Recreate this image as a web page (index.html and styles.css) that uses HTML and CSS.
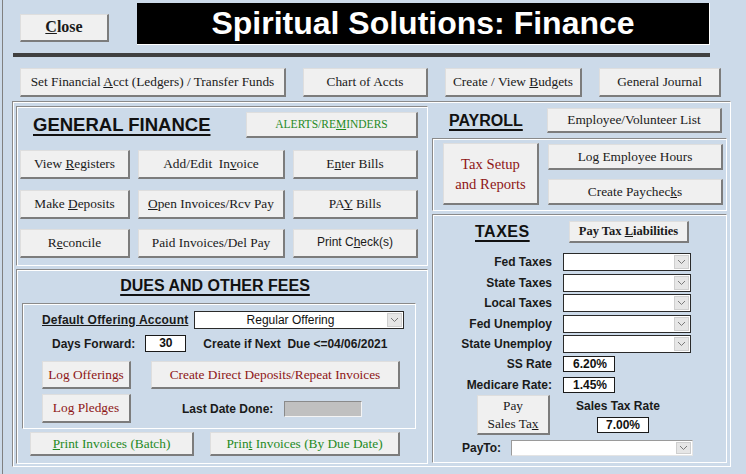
FILE: index.html
```html
<!DOCTYPE html>
<html lang="en">
<head>
    <meta charset="UTF-8">
    <title>Spiritual Solutions: Finance</title>
    <link rel="stylesheet" href="styles.css">
</head>
<body>
<div class="form">

    <div class="top">
        <button class="btn btn-close"><u>C</u>lose</button>
        <div class="title">Spiritual Solutions: Finance</div>
    </div>
    <div class="rule"></div>

    <div class="nav">
        <button class="btn nav-fin">Set Financial <u>A</u>cct (Ledgers) / Transfer Funds</button>
        <button class="btn nav-chart">Chart of Accts</button>
        <button class="btn nav-budget">Create / View <u>B</u>udgets</button>
        <button class="btn nav-journal">General Journal</button>
    </div>

    <div class="frame">
        <div class="col-left">
            <!-- general finance -->
            <section class="panel gf">
                <div class="gf-head">
                    <h2 class="heading gf-title">GENERAL FINANCE</h2>
                    <button class="btn green alerts">ALERTS/RE<u>M</u>INDERS</button>
                </div>
                <div class="gf-grid">
                    <button class="btn">View <u>R</u>egisters</button>
                    <button class="btn">Add/Edit&nbsp; In<u>v</u>oice</button>
                    <button class="btn">E<u>n</u>ter Bills</button>
                    <button class="btn">Make <u>D</u>eposits</button>
                    <button class="btn"><u>O</u>pen Invoices/Rcv Pay</button>
                    <button class="btn">PA<u>Y</u> Bills</button>
                    <button class="btn">R<u>e</u>concile</button>
                    <button class="btn">Paid Invoices/Del Pay</button>
                    <button class="btn sans">Print C<u>h</u>eck(s)</button>
                </div>
            </section>

            <!-- dues -->
            <section class="panel dues">
                <h2 class="heading dues-title">DUES AND OTHER FEES</h2>
                <div class="panel dues-inner">
                    <div class="row r-offer">
                        <span class="label ul">Default Offering Account</span>
                        <div class="combo offer-combo">
                            <span class="combo-text">Regular Offering</span>
                            <i class="arrow"><svg width="9" height="6" viewBox="0 0 9 6"><polyline points="1,1 4.5,4.5 8,1" fill="none" stroke="#7a7a7a" stroke-width="1"/></svg></i>
                        </div>
                    </div>
                    <div class="row r-days">
                        <span class="label days-label">Days Forward:</span>
                        <div class="box days-box">30</div>
                        <span class="label next-label">Create if Next&nbsp; Due &lt;=04/06/2021</span>
                    </div>
                    <div class="row r-log">
                        <button class="btn red log-btn">Log Offerings</button>
                        <button class="btn red direct-btn">Create Direct Deposits/Repeat Invoices</button>
                    </div>
                    <div class="row r-pledge">
                        <button class="btn red log-btn pledge-btn">Log Pledges</button>
                        <span class="label last-label">Last Date Done:</span>
                        <div class="grey-box"></div>
                    </div>
                </div>
                <div class="row r-print">
                    <button class="btn green print-batch"><u>P</u>rint Invoices (Batch)</button>
                    <button class="btn green print-due">Prin<u>t</u> Invoices (By Due Date)</button>
                </div>
            </section>
        </div>

        <div class="col-right">
            <div class="pay-head">
                <h2 class="heading pay-title">PAYROLL</h2>
                <button class="btn emp-btn">Employee/Volunteer List</button>
            </div>

            <section class="panel setup">
                <button class="btn red setup-btn">Tax Setup<br>and Reports</button>
                <div class="setup-side">
                    <button class="btn side-btn">Log Employee Hours</button>
                    <button class="btn side-btn">Create Paychec<u>k</u>s</button>
                </div>
            </section>

            <!-- taxes -->
            <section class="panel taxes">
                <div class="tax-head">
                    <h2 class="heading tax-title">TAXES</h2>
                    <button class="btn bold liab-btn">Pay Tax <u>L</u>iabilities</button>
                </div>
                <div class="tax-grid">
                    <span class="label">Fed Taxes</span>
                    <div class="combo tax-combo"><span class="combo-text"></span><i class="arrow"><svg width="9" height="6" viewBox="0 0 9 6"><polyline points="1,1 4.5,4.5 8,1" fill="none" stroke="#7a7a7a" stroke-width="1"/></svg></i></div>
                    <span class="label">State Taxes</span>
                    <div class="combo tax-combo"><span class="combo-text"></span><i class="arrow"><svg width="9" height="6" viewBox="0 0 9 6"><polyline points="1,1 4.5,4.5 8,1" fill="none" stroke="#7a7a7a" stroke-width="1"/></svg></i></div>
                    <span class="label">Local Taxes</span>
                    <div class="combo tax-combo"><span class="combo-text"></span><i class="arrow"><svg width="9" height="6" viewBox="0 0 9 6"><polyline points="1,1 4.5,4.5 8,1" fill="none" stroke="#7a7a7a" stroke-width="1"/></svg></i></div>
                    <span class="label">Fed Unemploy</span>
                    <div class="combo tax-combo"><span class="combo-text"></span><i class="arrow"><svg width="9" height="6" viewBox="0 0 9 6"><polyline points="1,1 4.5,4.5 8,1" fill="none" stroke="#7a7a7a" stroke-width="1"/></svg></i></div>
                    <span class="label">State Unemploy</span>
                    <div class="combo tax-combo"><span class="combo-text"></span><i class="arrow"><svg width="9" height="6" viewBox="0 0 9 6"><polyline points="1,1 4.5,4.5 8,1" fill="none" stroke="#7a7a7a" stroke-width="1"/></svg></i></div>
                    <span class="label">SS Rate</span>
                    <div class="box rate-box">6.20%</div>
                    <span class="label medi">Medicare Rate:</span>
                    <div class="box rate-box medi">1.45%</div>
                </div>
                <div class="sales-row">
                    <button class="btn sales-btn">Pay<br>Sales Ta<u>x</u></button>
                    <div class="sales-rate">
                        <span class="label">Sales Tax Rate</span>
                        <div class="box rate-box sales-box">7.00%</div>
                    </div>
                </div>
                <div class="payto-row">
                    <span class="label">PayTo:</span>
                    <div class="combo payto-combo"><span class="combo-text"></span><i class="arrow"><svg width="9" height="6" viewBox="0 0 9 6"><polyline points="1,1 4.5,4.5 8,1" fill="none" stroke="#7a7a7a" stroke-width="1"/></svg></i></div>
                </div>
            </section>
        </div>
    </div>
</div>
</body>
</html>
```

FILE: styles.css
```css
body {
    margin: 0;
    background: #ccdae9;
    font-family: 'Liberation Sans', Arial, sans-serif;
    color: #111;
    width: 746px;
    height: 474px;
    overflow: hidden;
}

.form {
    margin-left: 2px;
    border-left: 1px solid #808080;
    height: 474px;
    box-sizing: border-box;
}

/* buttons */
.btn {
    display: block;
    text-align: center;
    box-sizing: border-box;
    padding: 0;
    margin: 0;
    background: #f0f0f0;
    border-style: solid;
    border-width: 1px 2px 2px 1px;
    border-color: #dedede #7c7c7c #7c7c7c #dedede;
    font-family: 'Liberation Serif', 'Times New Roman', serif;
    font-size: 13.33px;
    color: #1a1a1a;
    line-height: 1.15;
    cursor: pointer;
    white-space: nowrap;
}

.btn.sans {
    font-family: 'Liberation Sans', Arial, sans-serif;
    font-size: 12px;
}

.btn.bold {
    font-weight: bold;
}

.btn.red {
    color: #8e1616;
}

.btn.green {
    color: #1f8a1f;
}

/* top */
.top {
    display: flex;
    align-items: flex-start;
    padding: 3px 0 0 17px;
}

.btn-close {
    margin-top: 11px;
    width: 89px;
    height: 28px;
    font-size: 16px;
    font-weight: bold;
}

.title {
    margin-left: 28px;
    width: 573px;
    height: 42px;
    box-sizing: border-box;
    background: #000;
    border-right: 1px solid #fff;
    border-bottom: 1px solid #fff;
    color: #fff;
    font-size: 32px;
    font-weight: bold;
    display: flex;
    align-items: center;
    justify-content: center;
}

.rule {
    margin: 8px 0 0 10px;
    width: 697px;
    height: 4px;
    background: #404040;
}

.nav {
    display: flex;
    gap: 17px;
    margin-top: 11px;
    padding-left: 17px;
}

.nav .btn {
    height: 29px;
}

.nav-fin { width: 266px; }
.nav-chart { width: 125px; }
.nav-budget { width: 137px; }
.nav-journal { width: 122px; }

/* panels */
.frame,
.panel {
    box-sizing: border-box;
    border: 1px solid;
    border-color: #8a8a8a #fff #fff #8a8a8a;
    box-shadow: inset 1px 1px 0 #fff;
}

.frame {
    display: flex;
    gap: 4px;
    margin: 4px 0 0 9px;
    width: 719px;
    height: 366px;
    padding: 4px 0 0 3px;
}

.col-left {
    width: 412px;
    display: flex;
    flex-direction: column;
    gap: 3px;
}

.col-right {
    width: 295px;
    display: flex;
    flex-direction: column;
}

.heading {
    margin: 0;
    font-weight: bold;
    color: #111;
    text-decoration: underline;
    text-decoration-thickness: 2px;
    text-underline-offset: 3px;
}

.label {
    font-size: 12px;
    font-weight: bold;
    color: #1a1a1a;
    white-space: nowrap;
}

.label.ul {
    text-decoration: underline;
}

.row {
    display: flex;
    align-items: center;
}

/* general finance */
.gf {
    height: 160px;
}

.gf-head {
    display: flex;
    align-items: center;
    padding-top: 5px;
}

.gf-title {
    margin-left: 16px;
    font-size: 18.5px;
    line-height: 26px;
}

.alerts {
    margin: 0 9px 0 auto;
    width: 172px;
    height: 26px;
    font-size: 11.5px;
}

.gf-grid {
    display: grid;
    grid-template-columns: 110px 147px 125px;
    grid-auto-rows: 29px;
    column-gap: 8px;
    row-gap: 10.5px;
    margin: 12px 0 0 3px;
}

.gf-grid .btn {
    height: 29px;
}

/* dues */
.dues {
    height: 195px;
}

.dues-title {
    margin-top: 6px;
    padding-right: 14px;
    text-align: center;
    font-size: 16px;
    line-height: 20px;
}

.dues-inner {
    margin: 7px 0 0 5px;
    width: 394px;
    height: 126px;
}

.r-offer {
    margin-top: 7px;
}

.r-offer .label {
    margin-left: 19px;
    letter-spacing: 0.2px;
}

.combo {
    display: flex;
    box-sizing: border-box;
    background: #fff;
    border: 1px solid #2a2a2a;
}

.combo-text {
    flex: 1;
    font-size: 12px;
    line-height: 16px;
    text-align: center;
    color: #111;
}

.arrow {
    width: 15px;
    margin: 1px;
    box-sizing: border-box;
    background: #e6e6e6;
    border: 1px solid #cfcfcf;
    display: flex;
    align-items: center;
    justify-content: center;
}

.offer-combo {
    margin: 0 11px 0 auto;
    width: 210px;
    height: 18px;
}

.r-days {
    margin-top: 6px;
}

.days-label {
    margin-left: 29px;
}

.box {
    box-sizing: border-box;
    background: #fff;
    border: 1px solid #1a1a1a;
    font-size: 12px;
    font-weight: bold;
    color: #111;
}

.days-box {
    margin-left: 10px;
    width: 41px;
    height: 17px;
    text-align: center;
    line-height: 15px;
}

.next-label {
    margin-left: 17px;
}

.r-log {
    margin-top: 9px;
}

.log-btn {
    margin-left: 19px;
    width: 89px;
    height: 28px;
}

.direct-btn {
    margin-left: 20px;
    width: 249px;
    height: 28px;
}

.r-pledge {
    margin-top: 5px;
}

.pledge-btn {
    height: 29px;
}

.last-label {
    margin-left: 51px;
}

.grey-box {
    margin-left: 11px;
    width: 78px;
    height: 16px;
    box-sizing: border-box;
    background: #c0c0c0;
    border: 1px solid;
    border-color: #8a8a8a #f4f4f4 #f4f4f4 #8a8a8a;
}

.r-print {
    margin-top: 3px;
}

.r-print .btn {
    height: 24px;
}

.print-batch {
    margin-left: 13px;
    width: 164px;
}

.print-due {
    margin-left: 16px;
    width: 190px;
}

/* payroll */
.pay-head {
    display: flex;
    align-items: center;
    padding-top: 2px;
}

.pay-title {
    margin-left: 17px;
    font-size: 16px;
    line-height: 25px;
}

.emp-btn {
    margin: 0 5px 0 auto;
    width: 175px;
    height: 25px;
}

.setup {
    display: flex;
    align-items: flex-start;
    margin-top: 5px;
    height: 73px;
}

.setup-btn {
    margin: 4px 0 0 10px;
    width: 96px;
    height: 62px;
    font-size: 14.67px;
    line-height: 20px;
}

.setup-side {
    display: flex;
    flex-direction: column;
    gap: 9px;
    margin: 5px 0 0 9px;
}

.side-btn {
    width: 175px;
    height: 26px;
}

/* taxes */
.taxes {
    margin-top: 3px;
    height: 249px;
}

.tax-head {
    display: flex;
    align-items: center;
    padding-top: 6px;
}

.tax-title {
    margin-left: 42px;
    font-size: 16px;
    letter-spacing: 0.5px;
    line-height: 22px;
}

.liab-btn {
    margin: 0 37px 0 auto;
    width: 120px;
    height: 22px;
    font-size: 12.5px;
}

.tax-grid {
    display: grid;
    grid-template-columns: 119px 128px;
    column-gap: 11px;
    row-gap: 2.5px;
    align-items: center;
    margin-top: 10px;
}

.tax-grid .label {
    text-align: right;
}

.tax-combo {
    height: 18px;
}

.rate-box {
    width: 52px;
    height: 16px;
    line-height: 14px;
    padding-left: 9px;
}

.medi {
    margin-top: 3px;
}

.sales-row {
    display: flex;
    align-items: flex-start;
    margin-top: 2px;
}

.sales-btn {
    margin-left: 44px;
    width: 73px;
    height: 40px;
    line-height: 18px;
}

.sales-rate {
    display: flex;
    flex-direction: column;
    align-items: flex-start;
    margin-left: 26px;
    padding-top: 4px;
}

.sales-box {
    margin: 4px 0 0 21px;
    padding-left: 8px;
}

.payto-row {
    display: flex;
    align-items: center;
    margin-top: 5px;
}

.payto-row .label {
    margin-left: 29px;
}

.payto-combo {
    margin: 0 33px 0 auto;
    width: 182px;
    height: 16px;
    border-color: #9a9a9a #e4e4e4 #e4e4e4 #9a9a9a;
}
```
